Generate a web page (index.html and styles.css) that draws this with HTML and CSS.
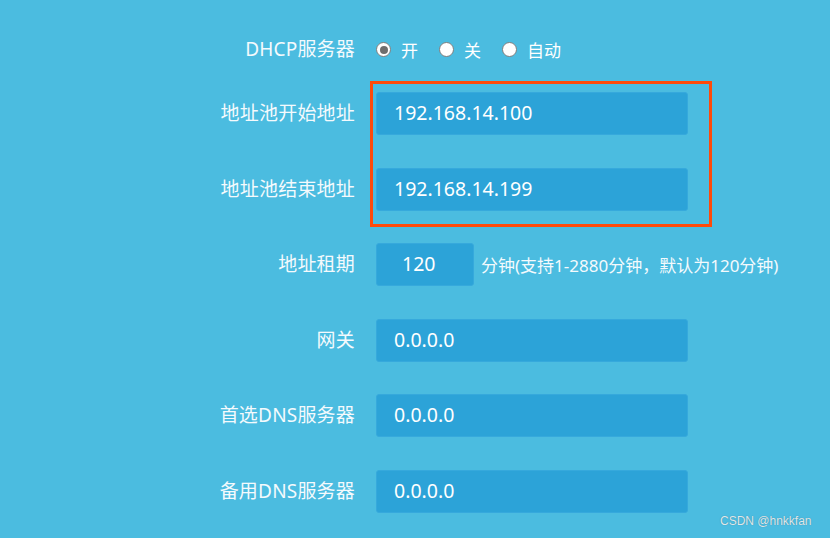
FILE: index.html
```html
<!DOCTYPE html>
<html lang="zh-CN">
<head>
<meta charset="utf-8">
<title>DHCP</title>
<link rel="stylesheet" href="styles.css">
</head>
<body>
<div class="page">
  <div class="form">
    <div class="row row-dhcp">
      <div class="label">DHCP服务器</div>
      <div class="radios">
        <label class="radio"><span class="dot on"></span>开</label>
        <label class="radio"><span class="dot"></span>关</label>
        <label class="radio"><span class="dot"></span>自动</label>
      </div>
    </div>
    <div class="row">
      <div class="label">地址池开始地址</div>
      <div class="input">192.168.14.100</div>
    </div>
    <div class="row">
      <div class="label">地址池结束地址</div>
      <div class="input">192.168.14.199</div>
    </div>
    <div class="row">
      <div class="label">地址租期</div>
      <div class="input short">120</div>
      <div class="hint">分钟(支持1-2880分钟，默认为120分钟)</div>
    </div>
    <div class="row">
      <div class="label">网关</div>
      <div class="input">0.0.0.0</div>
    </div>
    <div class="row">
      <div class="label">首选DNS服务器</div>
      <div class="input">0.0.0.0</div>
    </div>
    <div class="row">
      <div class="label">备用DNS服务器</div>
      <div class="input">0.0.0.0</div>
    </div>
  </div>
  <div class="highlight"></div>
  <div class="watermark">CSDN @hnkkfan</div>
</div>
</body>
</html>
```
FILE: styles.css
```css
* { box-sizing: border-box; }
html, body { margin: 0; padding: 0; }
body {
  width: 830px;
  height: 538px;
  overflow: hidden;
  background: #4bbce0;
  font-family: "Noto Sans", "Noto Sans CJK SC", sans-serif;
  color: #fff;
}
.page {
  position: relative;
  width: 830px;
  height: 538px;
}
.form {
  display: flex;
  flex-direction: column;
  gap: 32.6px;
  padding-top: 28px;
}
.row {
  display: flex;
  align-items: center;
  height: 43px;
}
.row-dhcp { margin-bottom: -11.6px; }
.label {
  width: 356px;
  padding-right: 1px;
  text-align: right;
  font-size: 19px;
  color: #f4fafd;
  line-height: 43px;
  flex: none;
  letter-spacing: 0.2px;
}
.radios {
  display: flex;
  align-items: center;
  margin-left: 20px;
}
.radio {
  display: flex;
  align-items: center;
  font-size: 17px;
  margin-right: 21px;
}
.dot {
  width: 15px;
  height: 15px;
  border-radius: 50%;
  background: #fff;
  border: 1.5px solid #7e7e7e;
  margin-right: 10px;
  display: flex;
  align-items: center;
  justify-content: center;
}
.dot.on::after {
  content: "";
  width: 8px;
  height: 8px;
  border-radius: 50%;
  background: #6e6e6e;
}
.input {
  margin-left: 20px;
  width: 312px;
  height: 43px;
  background: #2ca3d8;
  border: 1px solid #36a9dc;
  border-radius: 3px;
  padding-left: 17px;
  font-size: 19.5px;
  line-height: 40px;
  color: #fff;
  flex: none;
}
.input.short {
  width: 98px;
  padding-left: 25px;
}
.hint {
  margin-left: 7px;
  font-size: 17px;
  color: #f4fafd;
}
.highlight {
  position: absolute;
  left: 370px;
  top: 81px;
  width: 342px;
  height: 146px;
  border: 3px solid #ff4a0a;
}
.watermark {
  position: absolute;
  left: 720px;
  top: 514px;
  font-family: "Liberation Sans", Arial, sans-serif;
  font-size: 12px;
  color: #dfe8ec;
  text-shadow: 0 0 1px #3a7f99;
}
```
